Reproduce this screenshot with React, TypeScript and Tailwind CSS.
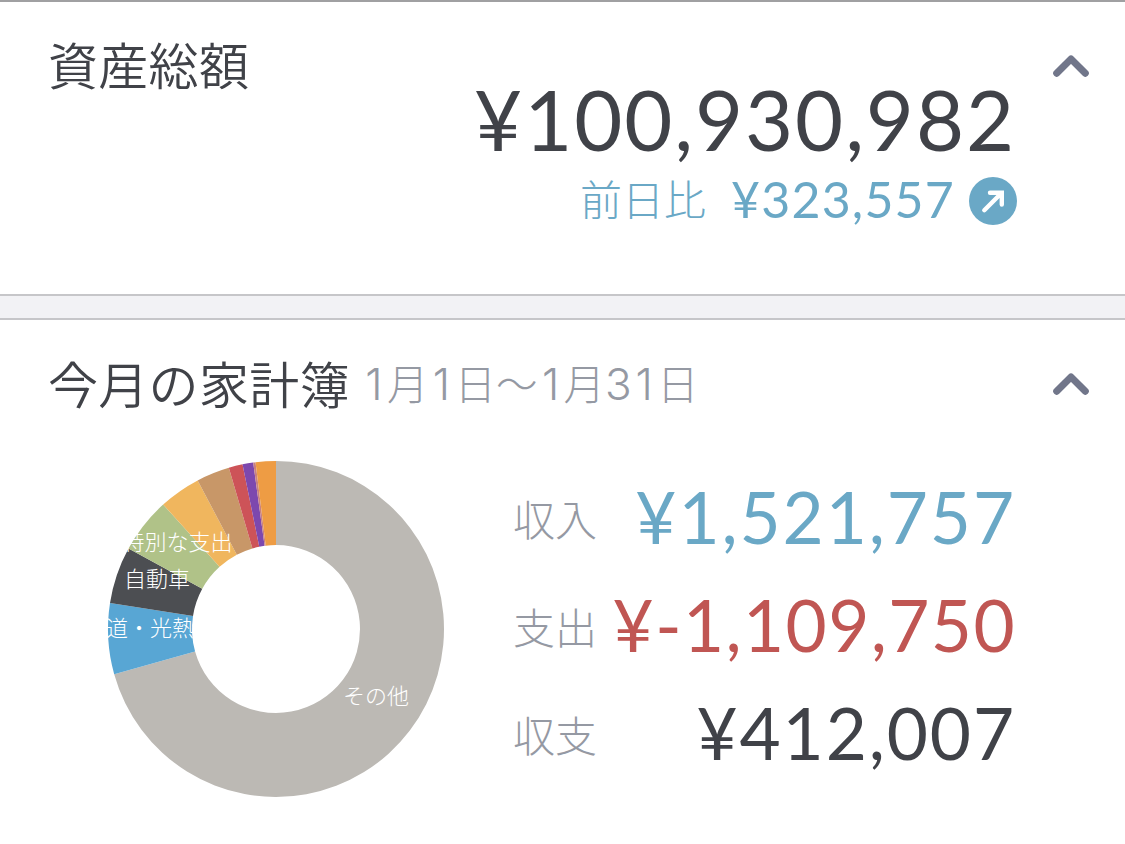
import React from 'react';
import { clsx } from 'clsx';

interface Slice {
  color: string;
  end: number;
}

interface Summary {
  label: string;
  amount: string;
  color: string;
  tracking: string;
}

// end angle of each category, clockwise from the top
const slices: Slice[] = [
  { color: '#bcb9b4', end: 254.4 },
  { color: '#58a6d4', end: 278.9 },
  { color: '#4c4e52', end: 298.6 },
  { color: '#b0c288', end: 317.8 },
  { color: '#f0b65e', end: 332.2 },
  { color: '#c89768', end: 343.7 },
  { color: '#cd5358', end: 348.5 },
  { color: '#7d48ae', end: 352.2 },
  { color: '#c9807f', end: 353 },
  { color: '#ee9c44', end: 360 },
];

const summaries: Summary[] = [
  { label: '収入', amount: '¥1,521,757', color: 'text-[#6aa8c6]', tracking: 'tracking-[1.9px]' },
  { label: '支出', amount: '¥-1,109,750', color: 'text-[#c05653]', tracking: 'tracking-[1.4px]' },
  { label: '収支', amount: '¥412,007', color: 'text-[#404248]', tracking: 'tracking-[1.9px]' },
];

const labels = [
  { text: '特別な支出', x: 69.5, y: 81 },
  { text: '自動車', x: 49, y: 118 },
  { text: '水道・光熱費', x: 42, y: 167 },
  { text: 'その他', x: 268, y: 235 },
];

const period = '1月1日〜1月31日';

const point = (angle: number, r: number) => {
  const rad = ((angle - 90) * Math.PI) / 180;
  return `${(168 + r * Math.cos(rad)).toFixed(2)} ${(168 + r * Math.sin(rad)).toFixed(2)}`;
};

const slicePath = (start: number, end: number) => {
  const large = end - start > 180 ? 1 : 0;
  return `M${point(start, 168)}A168 168 0 ${large} 1 ${point(end, 168)}L${point(end, 84)}A84 84 0 ${large} 0 ${point(start, 84)}Z`;
};

const Donut = () => (
  <svg width="336" height="336" viewBox="0 0 336 336" className="block overflow-visible">
    {slices.map((s, i) => (
      <path key={s.color} d={slicePath(i ? slices[i - 1].end : 0, s.end)} fill={s.color} />
    ))}
    {labels.map(l => (
      <text
        key={l.text}
        x={l.x}
        y={l.y + 8}
        textAnchor="middle"
        className="fill-white text-[22px] font-light"
      >
        {l.text}
      </text>
    ))}
  </svg>
);

const Chevron = () => (
  <svg width="36" height="22" viewBox="0 0 36 22" fill="none" className="block shrink-0">
    <path d="M3.7 18.3L18 4L32.3 18.3" stroke="#71768a" strokeWidth="7" strokeLinecap="round" strokeLinejoin="round" />
  </svg>
);

const UpArrow = () => (
  <svg width="48" height="48" viewBox="0 0 48 48" fill="none" className="block shrink-0">
    <circle cx="24" cy="24" r="24" fill="#6aa8c6" />
    <path d="M15.3 33.2L32 16.5M21 15.8H32.8V27.6" stroke="#fff" strokeWidth="4.4" strokeLinecap="round" />
  </svg>
);

export default function App() {
  return (
    <div className="w-[1125px] h-[844px] overflow-hidden bg-white text-[#404248] font-['Noto_Sans_CJK_JP',sans-serif]">
      {/* Total assets */}
      <section className="h-[294px] border-t-2 border-[#a0a0a2] flex items-start pl-12">
        <h2 className="w-[202px] mt-[25px] text-[50px] leading-[72px] tracking-[0.3px] font-[350] whitespace-nowrap">資産総額</h2>
        <div className="w-[767px] mt-[67px] flex flex-col items-end">
          <p className="font-[Lato] text-[83px] leading-[100px] tracking-[1.9px] whitespace-nowrap pr-px">¥100,930,982</p>
          <div className="flex items-center h-[60px] text-[#6aa8c6] mt-0.5">
            <span className="text-[42px] leading-[60px] font-light -mt-1.5">前日比</span>
            <span className="font-[Lato] text-[50px] leading-[60px] tracking-[1.2px] -mt-1 ml-[25px] mr-3.5">¥323,557</span>
            <UpArrow />
          </div>
        </div>
        <button className="ml-9 mt-[53px]">
          <Chevron />
        </button>
      </section>

      <div className="h-[26px] bg-[#f2f2f5] border-y-2 border-[#c6c6c9]" />

      {/* Monthly household budget */}
      <section>
        <div className="flex items-start pl-12 h-[141px]">
          <h2 className="w-[302px] mt-[26px] text-[50px] leading-[72px] tracking-[0.3px] font-[350] whitespace-nowrap">今月の家計簿</h2>
          <p className="ml-[11px] mt-8 w-[692px] flex items-baseline text-[41.5px] leading-[60px] font-light text-[#9599a3] whitespace-nowrap">
            {[...period].map((ch, i) => (
              <span
                key={i}
                className={/\d/.test(ch) ? 'w-[26px] text-center font-[Inter] text-[44px]' : undefined}
              >
                {ch}
              </span>
            ))}
          </p>
          <button className="mt-[53px]">
            <Chevron />
          </button>
        </div>
        <div className="flex items-start pl-[108px]">
          <Donut />
          <dl className="ml-[69px] mt-[3px] w-[503px]">
            {summaries.map(s => (
              <div key={s.label} className="flex items-center justify-between h-[108px]">
                <dt className="text-[42px] leading-[60px] font-light text-[#9599a3]">{s.label}</dt>
                <dd className={clsx('font-[Lato] text-[71px] leading-[86px] -mt-0.5', s.color, s.tracking)}>{s.amount}</dd>
              </div>
            ))}
          </dl>
        </div>
      </section>
    </div>
  );
}
